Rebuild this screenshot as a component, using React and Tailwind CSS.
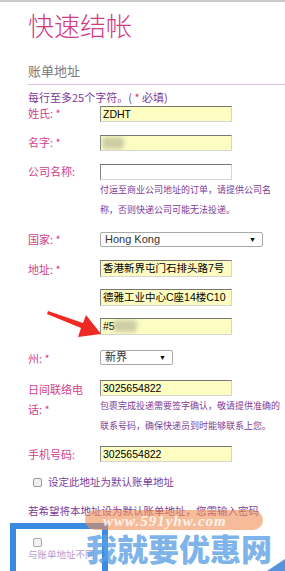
import React from "react";

const CJK = { fontFamily: '"Microsoft YaHei", "Noto Sans CJK SC", sans-serif' };
const LAT = { fontFamily: '"Liberation Sans", "Noto Sans CJK SC", sans-serif' };

function Label({ children, star = true, className = "" }) {
  return (
    <div className={"text-[11px] leading-[14px] text-[#d2418c] " + className}>
      {children}
      {star && <span> *</span>}
    </div>
  );
}

function Field({ value, yellow = true, blur, className = "" }) {
  return (
    <div
      className={
        "relative w-[132px] h-[16px] border border-t-[#767676] border-l-[#8a8a8a] border-r-[#d4d4d4] border-b-[#d4d4d4] text-[10.5px] leading-[14px] pl-[2px] text-black whitespace-nowrap overflow-hidden " +
        (yellow ? "bg-[#fdfdc2] " : "bg-white border-[#a8a8a8] ") +
        className
      }
      style={LAT}
    >
      {value}
      {blur && (
        <div
          className="absolute top-[1px] h-[12px] rounded-sm bg-[#b9b99a] opacity-70 blur-[2px]"
          style={{ left: blur[0], width: blur[1] }}
        />
      )}
    </div>
  );
}

function Select({ value, width }) {
  return (
    <div
      className="flex items-center justify-between h-[15px] border border-[#a9a9a9] rounded-[2px] bg-white pl-[4px] pr-[6px] text-[11px] leading-[13px] text-[#333]"
      style={{ width, ...LAT }}
    >
      <span>{value}</span>
      <span className="text-[7px] text-black">▼</span>
    </div>
  );
}

function Help({ children }) {
  return <p className="text-[9px] leading-[20px] text-[#7c3b99] w-[180px]">{children}</p>;
}

export default function App() {
  return (
    <div
      className="relative w-[285px] h-[571px] overflow-hidden bg-white border-t-2 border-[#c9c9c9]"
      style={CJK}
    >
      <div className="pl-[28px]">
        <h1 className="pt-[7px] text-[26px] leading-[32px] font-light text-[#cf3a82]">快速结帐</h1>
        <div className="mt-[20px] text-[13px] leading-[20px] pb-[3px] text-[#7a7a7a] border-b border-[#d6c3d8]">
          账单地址
        </div>
        <p className="mt-[5px] text-[11px] leading-[14px] text-[#7c3b99]">
          每行至多25个字符。( <span className="text-[#e0306a]">*</span> 必填)
        </p>

        <div className="grid grid-cols-[72px_1fr] mt-[2px]">
          <Label>姓氏:</Label>
          <Field value="ZDHT" />

          <Label className="mt-[13px]">名字:</Label>
          <Field value="" blur={[1, 22]} className="mt-[13px]" />

          <Label className="mt-[13px]" star={false}>公司名称:</Label>
          <div className="mt-[13px]">
            <Field value="" yellow={false} />
            <Help>付运至商业公司地址的订单，请提供公司名称，否则快递公司可能无法投递。</Help>
          </div>

          <Label className="mt-[12px]">国家:</Label>
          <div className="mt-[12px]">
            <Select value="Hong Kong" width="163px" />
          </div>

          <Label className="mt-[15px]">地址:</Label>
          <div className="mt-[13px] flex flex-col gap-[12px]">
            <Field value="香港新界屯门石排头路7号" className="h-[17px] leading-[15px]" />
            <Field value="德雅工业中心C座14楼C10" className="h-[17px] leading-[15px]" />
            <Field value="#5" blur={[12, 24]} className="h-[17px] leading-[15px]" />
          </div>

          <Label className="mt-[16px]">州:</Label>
          <div className="mt-[15px]">
            <Select value="新界" width="73px" />
          </div>

          <div className="mt-[14px] text-[11px] leading-[20px] text-[#d2418c] w-[62px]">
            日间联络电话: *
          </div>
          <div className="mt-[15px]">
            <Field value="3025654822" />
            <Help>包裹完成投递需要签字确认，敬请提供准确的联系号码，确保快递员到时能够联系上您。</Help>
          </div>

          <Label className="mt-[11px]" star={false}>手机号码:</Label>
          <Field value="3025654822" className="mt-[10px]" />
        </div>

        <label className="flex items-center gap-[6px] mt-[13px] pl-[5px] text-[10.5px] leading-[14px] text-[#7c3b99]">
          <span className="w-[9px] h-[9px] border border-[#9a9a9a] rounded-[2px] bg-[#f0f0f0]" />
          设定此地址为默认账单地址
        </label>

        <p className="mt-[15px] text-[10.5px] leading-[14px] text-[#7c3b99] whitespace-nowrap">
          若希望将本地址设为默认账单地址，您需输入密码
        </p>

        <div className="mt-[20px] pl-[5px]">
          <span className="block w-[9px] h-[9px] border border-[#a8a8a8] rounded-[2px] bg-[#f2f2f2]" />
          <p className="mt-[1px] -ml-[5px] text-[9.5px] leading-[12px] text-[#b99bd2]">与账单地址不同</p>
        </div>
      </div>

      {/* annotation arrow */}
      <svg className="absolute left-0 top-0 pointer-events-none" width="285" height="571">
        <polygon points="48,309 83,321 86,313 101,332 78,335 81,326 47,312" fill="#ee2a22" />
      </svg>

      {/* annotation frame */}
      <div className="absolute left-[10px] top-[521px] w-[98px] h-[60px] border-[6px] border-[#3a8ae0] pointer-events-none" />

      {/* watermark */}
      <div className="absolute left-[85px] top-[508px] w-[178px] h-[20px] rounded-full bg-[#f09055]/60 pointer-events-none" />
      <div
        className="absolute left-[103px] top-[509px] text-[15px] leading-[20px] italic font-bold tracking-[1px] text-white/80 pointer-events-none"
        style={{ fontFamily: '"Liberation Serif", serif' }}
      >
        www.591yhw.com
      </div>
      <div
        className="absolute left-[86px] top-[526px] text-[31px] leading-[40px] font-black text-[#5a9fe4]/80 whitespace-nowrap pointer-events-none"
        style={CJK}
      >
        我就要优惠网
      </div>
      <svg className="absolute right-0 bottom-0 pointer-events-none" width="18" height="12">
        <polygon points="18,0 18,12 0,12" fill="#3a7fd8" opacity="0.85" />
      </svg>
    </div>
  );
}
